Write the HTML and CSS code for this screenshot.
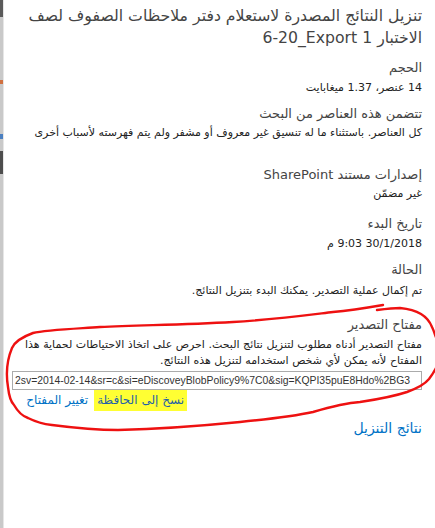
FILE: index.html
```html
<!DOCTYPE html>
<html lang="ar" dir="rtl">
<head>
<meta charset="utf-8">
<title>تنزيل النتائج</title>
<link rel="stylesheet" href="styles.css">
</head>
<body>
<div class="page">
  <div class="edge"></div>
  <main class="panel">
    <h1 class="title">تنزيل النتائج المصدرة لاستعلام دفتر ملاحظات الصفوف لصف<br>الاختبار <span dir="ltr">6-20_Export 1</span></h1>

    <div class="field f-size">
      <div class="label">الحجم</div>
      <div class="value">14 عنصر، 1.37 ميغابايت</div>
    </div>

    <div class="field f-items">
      <div class="label">تتضمن هذه العناصر من البحث</div>
      <div class="value">كل العناصر. باستثناء ما له تنسيق غير معروف أو مشفر ولم يتم فهرسته لأسباب أخرى</div>
    </div>

    <div class="field f-versions">
      <div class="label">إصدارات مستند SharePoint</div>
      <div class="value">غير مضمّن</div>
    </div>

    <div class="field f-date">
      <div class="label">تاريخ البدء</div>
      <div class="value">30/1/2018 9:03 م</div>
    </div>

    <div class="field f-status">
      <div class="label">الحالة</div>
      <div class="value">تم إكمال عملية التصدير. يمكنك البدء بتنزيل النتائج.</div>
    </div>

    <div class="field f-key">
      <div class="label">مفتاح التصدير</div>
      <div class="value para">مفتاح التصدير أدناه مطلوب لتنزيل نتائج البحث. احرص على اتخاذ الاحتياطات لحماية هذا المفتاح لأنه يمكن لأي شخص استخدامه لتنزيل هذه النتائج.</div>
      <div class="keybox" dir="ltr">2sv=2014-02-14&amp;sr=c&amp;si=eDiscoveyBlobPolicy9%7C0&amp;sig=KQPI35puE8Hdo%2BG3</div>
      <div class="links">
        <a class="link copy" href="#">نسخ إلى الحافظة</a>
        <a class="link" href="#">تغيير المفتاح</a>
      </div>
    </div>

    <a class="download" href="#">نتائج التنزيل</a>
  </main>
  <svg class="ink" width="435" height="528" viewBox="0 0 435 528" aria-hidden="true">
    <path d="M383,305 C360,309 345,311 333,312 C300,316 270,320 233,322 C180,325 140,325 100,327 C70,329 45,330 33,333 C22,337 15,341 12,348 C7,360 6,375 8,387 C9,396 11,402 14,405 C18,412 22,416 28,418 C36,422 43,424 52,425 C75,428 95,430 118,430 C160,429 200,426 240,422 C270,419 295,416 313,412 C330,407 345,403 360,402 C380,399 395,396 407,392 C418,388 425,384 429,379 C432,375 434,372 436,368" fill="none" stroke="#ee1111" stroke-width="2.4" stroke-linecap="round"/>
    <path d="M377,310 C385,309 393,308 400,308 C410,309 416,311 421,314 C426,317 430,322 432,327 C434,331 435,335 437,340" fill="none" stroke="#ee1111" stroke-width="2.4" stroke-linecap="round"/>
  </svg>
</div>
</body>
</html>
```

FILE: styles.css
```css
html, body {
  margin: 0;
  padding: 0;
  background: #ffffff;
}

.page {
  position: relative;
  display: flex;
  width: 435px;
  height: 528px;
  overflow: hidden;
  direction: ltr;
}

.edge {
  width: 3px;
  flex: none;
  background: linear-gradient(to bottom,
    #5a5a5a 0px, #5a5a5a 17px,
    #c9c9c9 17px, #c9c9c9 80px,
    #d07040 80px, #d07040 84px,
    #c9c9c9 84px, #c9c9c9 134px,
    #4a7fc0 134px, #4a7fc0 139px,
    #c9c9c9 139px, #c9c9c9 151px,
    #4d4d4d 151px, #4d4d4d 174px,
    #c9c9c9 174px, #c9c9c9 100%);
  border-right: 1px solid #e6e6e6;
}

.panel {
  flex: 1;
  min-width: 0;
  direction: rtl;
  text-align: right;
  padding: 5px 13px 0 8px;
  font-family: "DejaVu Sans", "Noto Sans", sans-serif;
  color: #262626;
}

.title {
  margin: 0;
  font-size: 15.7px;
  font-weight: normal;
  line-height: 22px;
  color: #444444;
  white-space: nowrap;
}

.field {
  margin-top: 10px;
}

.label {
  font-size: 13px;
  line-height: 18px;
  color: #444444;
}

.value {
  margin-top: 3px;
  font-size: 11px;
  line-height: 16px;
  color: #222222;
}

.f-items { margin-top: 9px; }
.f-items .value { margin-top: 2px; }
.f-versions { margin-top: 25px; }
.f-versions .value { margin-top: 2px; }
.f-date { margin-top: 13px; }
.f-status { margin-top: 9px; }
.f-status .value { margin-top: 4px; }
.f-key { margin-top: 17px; }

.para {
  margin-top: 3px;
}

.keybox {
  margin-top: 2px;
  height: 17px;
  border: 1px solid #ababab;
  padding: 0 2px;
  font-family: "Liberation Sans", "DejaVu Sans", sans-serif;
  font-size: 10.4px;
  line-height: 17px;
  color: #333333;
  white-space: nowrap;
  overflow: hidden;
  text-align: left;
}

.links {
  display: flex;
  gap: 6px;
  padding-right: 235px;
}

.link {
  display: block;
  font-size: 12px;
  line-height: 21px;
  color: #0072c6;
  text-decoration: none;
  white-space: nowrap;
}

.copy {
  background: #ffff33;
  padding: 0 3px;
  color: #1f5fa8;
}

.download {
  display: inline-block;
  margin-top: 7px;
  font-size: 14px;
  line-height: 20px;
  color: #0072c6;
  text-decoration: none;
}

.ink {
  position: absolute;
  left: 0;
  top: 0;
  pointer-events: none;
}
```
